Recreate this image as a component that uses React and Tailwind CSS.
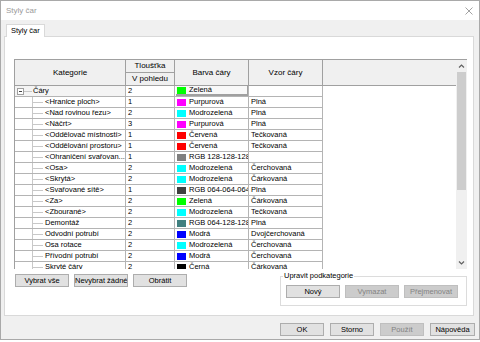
import React from 'react';

const rows = [
  { name: '<Hranice ploch>', w: '1', color: '#ff00ff', label: 'Purpurová', pattern: 'Plná' },
  { name: '<Nad rovinou řezu>', w: '2', color: '#00ffff', label: 'Modrozelená', pattern: 'Plná' },
  { name: '<Náčrt>', w: '3', color: '#ff00ff', label: 'Purpurová', pattern: 'Plná' },
  { name: '<Oddělovač místnosti>', w: '1', color: '#ff0000', label: 'Červená', pattern: 'Tečkovaná' },
  { name: '<Oddělování prostoru>', w: '1', color: '#ff0000', label: 'Červená', pattern: 'Tečkovaná' },
  { name: '<Ohraničení svařovan...', w: '1', color: '#808080', label: 'RGB 128-128-128', pattern: '' },
  { name: '<Osa>', w: '2', color: '#00ffff', label: 'Modrozelená', pattern: 'Čerchovaná' },
  { name: '<Skrytá>', w: '2', color: '#00ffff', label: 'Modrozelená', pattern: 'Čárkovaná' },
  { name: '<Svařované sítě>', w: '1', color: '#404040', label: 'RGB 064-064-064', pattern: 'Plná' },
  { name: '<Za>', w: '2', color: '#00ff00', label: 'Zelená', pattern: 'Čárkovaná' },
  { name: '<Zbourané>', w: '2', color: '#00ffff', label: 'Modrozelená', pattern: 'Tečkovaná' },
  { name: 'Demontáž', w: '2', color: '#408080', label: 'RGB 064-128-128', pattern: 'Plná' },
  { name: 'Odvodní potrubí', w: '2', color: '#0000ff', label: 'Modrá', pattern: 'Dvojčerchovaná' },
  { name: 'Osa rotace', w: '2', color: '#00ffff', label: 'Modrozelená', pattern: 'Čerchovaná' },
  { name: 'Přívodní potrubí', w: '2', color: '#0000ff', label: 'Modrá', pattern: 'Čerchovaná' },
  { name: 'Skryté čáry', w: '2', color: '#000000', label: 'Černá', pattern: 'Čárkovaná' },
];

const Btn = ({ children, disabled, className = '' }) => (
  <button
    className={`h-[13px] border text-[7.5px] leading-none whitespace-nowrap overflow-hidden ${
      disabled ? 'bg-[#cccccc] border-[#bfbfbf] text-[#838383]' : 'bg-[#e1e1e1] border-[#adadad] text-black'
    } ${className}`}
  >
    {children}
  </button>
);

const ChildRow = ({ name, w, color, label, pattern }) => (
  <div className="flex h-[11px] border-b border-[#b4b4b4] leading-[10px]">
    <div className="w-[111px] flex border-r border-[#b4b4b4] overflow-hidden whitespace-nowrap">
      <div className="w-[17px] shrink-0" />
      <div className="w-[11px] shrink-0 border-l border-[#c8c8c8] flex items-center">
        <div className="w-full border-t border-[#c8c8c8]" />
      </div>
      <span className="ml-[2px]">{name}</span>
    </div>
    <div className="w-[49px] border-r border-[#b4b4b4] pl-[2px]">{w}</div>
    <div className="w-[74px] border-r border-[#b4b4b4] flex items-center overflow-hidden whitespace-nowrap">
      <div className="ml-[2px] w-[9px] h-[7px] shrink-0" style={{ backgroundColor: color }} />
      <span className="ml-[3px]">{label}</span>
    </div>
    <div className="w-[74px] border-r border-[#b4b4b4] pl-[2px] whitespace-nowrap overflow-hidden">{pattern}</div>
  </div>
);

export default function App() {
  return (
    <div className="w-[480px] h-[340px] border border-[#a9a9a9] flex flex-col bg-white font-['Liberation_Sans',Arial,sans-serif] text-black text-[7.5px]">
      {/* title bar */}
      <div className="h-[19px] flex items-center justify-between pl-[5px] pr-[6px]">
        <span className="text-[8px] text-[#9a9a9a]">Styly čar</span>
        <svg width="8" height="8" viewBox="0 0 8 8" className="text-[#8a8a8a]">
          <path d="M0.5 0.5 L7.5 7.5 M7.5 0.5 L0.5 7.5" stroke="currentColor" strokeWidth="0.8" />
        </svg>
      </div>

      <div className="flex-1 bg-[#f0f0f0] pl-[3px] pr-[5px] pt-[4px] flex flex-col">
        {/* tab */}
        <div className="flex">
          <div className="ml-[2px] h-[13px] px-[4px] bg-white border border-b-0 border-[#d9d9d9] flex items-center relative -mb-px z-10">
            Styly čar
          </div>
        </div>

        {/* panel */}
        <div className="h-[280px] bg-white border border-[#d9d9d9] flex flex-col">
          <div className="mt-[22px] ml-[9px] w-[453px] h-[210px] flex border-l border-t border-[#a0a0a0]">
            <div className="flex-1 flex flex-col overflow-hidden">
              {/* header */}
              <div className="h-[26px] flex bg-[#f0f0f0] border-b border-[#a0a0a0] shrink-0 text-[8px]">
                <div className="w-[111px] border-r border-[#a0a0a0] flex items-center justify-center">Kategorie</div>
                <div className="w-[49px] border-r border-[#a0a0a0] flex flex-col">
                  <div className="h-[13px] border-b border-[#a0a0a0] flex justify-center leading-[11px] overflow-hidden">
                    Tloušťka
                  </div>
                  <div className="flex-1 flex items-center justify-center">V pohledu</div>
                </div>
                <div className="w-[74px] border-r border-[#a0a0a0] flex items-center justify-center">Barva čáry</div>
                <div className="w-[74px] border-r border-[#a0a0a0] flex items-center justify-center">Vzor čáry</div>
                <div className="flex-1" />
              </div>

              {/* body */}
              <div className="flex-1 flex overflow-hidden">
                <div className="w-[308px] flex flex-col shrink-0">
                  <div className="flex h-[11px] border-b border-[#b4b4b4] leading-[10px]">
                    <div className="w-[111px] flex items-center border-r border-[#b4b4b4] bg-[#f4f4f4]">
                      <div className="ml-[2px] w-[7px] h-[7px] border border-[#a0a0a0] bg-white flex items-center justify-center shrink-0">
                        <div className="w-[3px] h-px bg-[#444]" />
                      </div>
                      <div className="w-[8px] border-t border-[#c8c8c8]" />
                      <span className="ml-px">Čáry</span>
                    </div>
                    <div className="w-[49px] border-r border-[#b4b4b4] pl-[2px]">2</div>
                    <div className="w-[74px] border-r border-[#b4b4b4] pl-px">
                      <div className="h-[10px] flex items-center border-r border-b-2 border-[#a0a0a0] bg-[#f8f8f8] overflow-hidden whitespace-nowrap">
                        <div className="ml-px w-[9px] h-[7px] bg-[#00ff00] shrink-0" />
                        <span className="ml-[3px] border-b border-dotted border-black leading-[8px]">Zelená</span>
                      </div>
                    </div>
                    <div className="w-[74px] border-r border-[#b4b4b4]" />
                  </div>
                  {rows.map((r) => (
                    <ChildRow key={r.name} {...r} />
                  ))}
                </div>
                <div className="flex-1" />
              </div>
            </div>

            {/* scrollbar */}
            <div className="w-[11px] bg-[#f0f0f0] flex flex-col items-center">
              <svg width="7" height="11" viewBox="0 0 7 11" className="mt-[1px]">
                <path d="M1 6.5 L3.5 4 L6 6.5" fill="none" stroke="#606060" strokeWidth="1.2" />
              </svg>
              <div className="w-[9px] h-[118px] bg-[#cdcdcd]" />
              <div className="flex-1" />
              <svg width="7" height="11" viewBox="0 0 7 11" className="mb-[1px]">
                <path d="M1 4.5 L3.5 7 L6 4.5" fill="none" stroke="#606060" strokeWidth="1.2" />
              </svg>
            </div>
          </div>

          {/* below grid */}
          <div className="flex justify-between items-start">
            <div className="mt-[5px] ml-[10px] flex gap-[5px]">
              <Btn className="w-[54px]">Vybrat vše</Btn>
              <Btn className="w-[54px]">Nevybrat žádné</Btn>
              <Btn className="w-[54px]">Obrátit</Btn>
            </div>
            <div className="mt-[7px] mr-[6px] w-[187px] h-[30px] border border-[#dcdcdc] relative">
              <span className="absolute -top-[7px] left-[2px] px-px bg-white leading-[12px]">Upravit podkategorie</span>
              <div className="pt-[8px] pl-[5px] flex gap-[5px]">
                <Btn className="w-[54px]">Nový</Btn>
                <Btn className="w-[54px]" disabled>Vymazat</Btn>
                <Btn className="w-[54px]" disabled>Přejmenovat</Btn>
              </div>
            </div>
          </div>
        </div>

        {/* dialog buttons */}
        <div className="mt-[7px] flex justify-end gap-[6px] -mr-px">
          <Btn className="w-[44px]">OK</Btn>
          <Btn className="w-[44px]">Storno</Btn>
          <Btn className="w-[44px]" disabled>Použít</Btn>
          <Btn className="w-[45px]">Nápověda</Btn>
        </div>
      </div>
    </div>
  );
}
